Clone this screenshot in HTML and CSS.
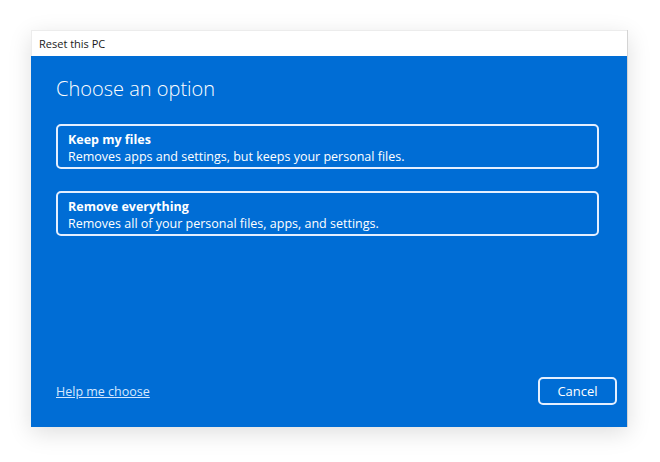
FILE: index.html
```html
<!DOCTYPE html>
<html lang="en">
<head>
    <meta charset="UTF-8">
    <title>Reset this PC</title>
    <link rel="stylesheet" href="styles.css">
</head>
<body>
    <div class="window">
        <div class="title-bar">Reset this PC</div>
        <div class="content">
            <h1>Choose an option</h1>
            <div class="options">
                <div class="option">
                    <div class="option-title">Keep my files</div>
                    <div class="option-desc">Removes apps and settings, but keeps your personal files.</div>
                </div>
                <div class="option">
                    <div class="option-title">Remove everything</div>
                    <div class="option-desc">Removes all of your personal files, apps, and settings.</div>
                </div>
            </div>
            <div class="footer">
                <a href="#" class="help-link">Help me choose</a>
                <button class="cancel-button">Cancel</button>
            </div>
        </div>
    </div>
</body>
</html>
```

FILE: styles.css
```css
* {
    margin: 0;
    padding: 0;
    box-sizing: border-box;
    font-family: 'Open Sans', 'Noto Sans', sans-serif;
}

body {
    background-color: #ffffff;
    width: 660px;
    height: 462px;
    padding: 30px 0 0 31px;
}

.window {
    width: 597px;
    height: 397px;
    display: flex;
    flex-direction: column;
    border-right: 1px solid #d4d4d4;
    box-shadow: 0 6px 22px rgba(0, 0, 0, 0.13);
}

.title-bar {
    height: 26px;
    background-color: #ffffff;
    border-top: 1px solid #ececec;
    border-left: 1px solid #ececec;
    padding: 5px 0 0 7px;
    font-size: 11px;
    color: #1a1a1a;
}

.content {
    flex: 1;
    background-color: #006dd5;
    padding: 19px 28px 22px 25px;
    display: flex;
    flex-direction: column;
    color: #ffffff;
}

h1 {
    font-size: 20px;
    font-weight: 300;
    margin-bottom: 22px;
}

.options {
    display: flex;
    flex-direction: column;
    gap: 22px;
}

.option {
    border: 2px solid #e4efff;
    border-radius: 5px;
    height: 45px;
    padding: 5px 10px;
    font-size: 12.5px;
    line-height: 17px;
}

.option-title {
    font-weight: 700;
}

.footer {
    margin-top: auto;
    display: flex;
    justify-content: space-between;
    align-items: center;
}

.help-link {
    color: #d6e8ff;
    font-size: 12.5px;
}

.cancel-button {
    width: 79px;
    height: 28px;
    margin-right: -18px;
    background: transparent;
    border: 2px solid #e4efff;
    border-radius: 5px;
    color: #ffffff;
    font-size: 13px;
}
```
